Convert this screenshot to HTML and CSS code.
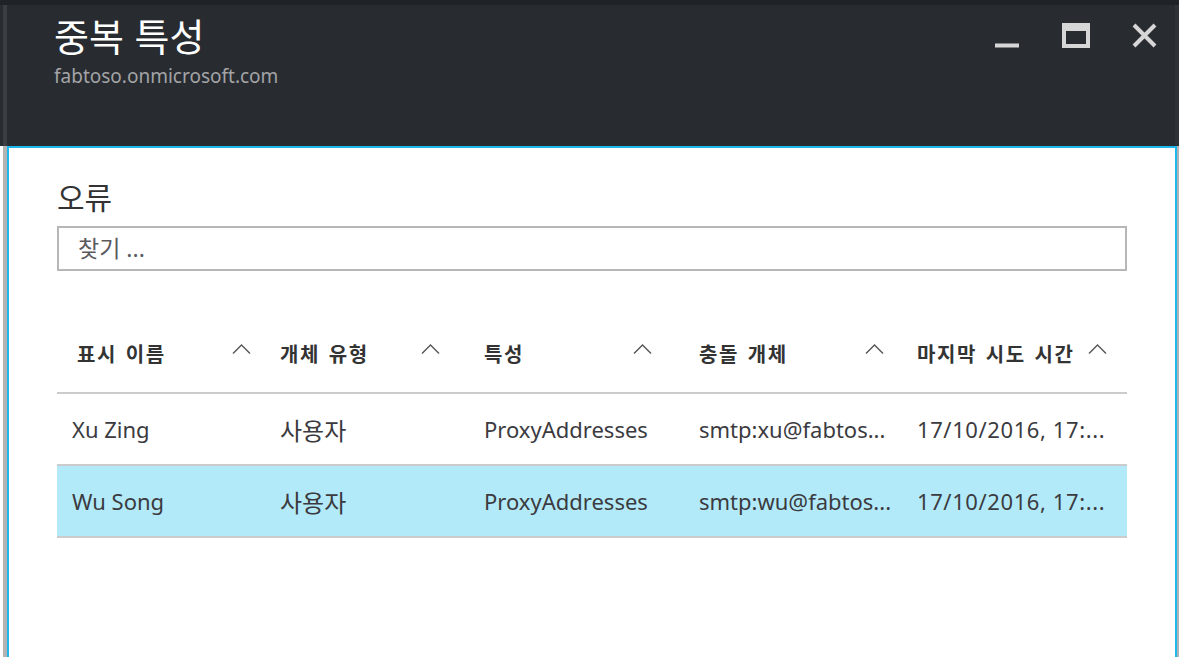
FILE: index.html
```html
<!DOCTYPE html>
<html lang="ko">
<head>
<meta charset="utf-8">
<title>중복 특성</title>
<link rel="stylesheet" href="styles.css">
</head>
<body>
<div class="topstrip"></div>
<header class="head">
  <div class="head-inner">
    <div class="titles">
      <h1 class="title">중복 특성</h1>
      <div class="sub">fabtoso.onmicrosoft.com</div>
    </div>
    <div class="controls">
      <svg class="ic ic-min" width="24" height="5" viewBox="0 0 24 5"><rect x="0" y="0.5" width="24" height="4" fill="#d6d6d6"/></svg>
      <svg class="ic ic-max" width="28" height="25" viewBox="0 0 28 25"><path d="M0 0H28V25H0Z M4 8V21H24V8Z" fill="#d6d6d6" fill-rule="evenodd"/></svg>
      <svg class="ic ic-close" width="25" height="25" viewBox="0 0 25 25"><path d="M2 2L23 23M23 2L2 23" stroke="#d6d6d6" stroke-width="4" fill="none"/></svg>
    </div>
  </div>
</header>
<main class="body">
  <div class="blade">
    <div class="panel">
      <h2 class="label">오류</h2>
      <div class="search">찾기 ...</div>
      <div class="table">
        <div class="row hrow">
          <div class="hcell h1"><span>표시 이름</span><svg class="caret" width="19" height="10" viewBox="0 0 19 10"><path d="M1 9.5L9.5 1L18 9.5" stroke="#555" stroke-width="1.4" fill="none"/></svg></div>
          <div class="hcell h2"><span>개체 유형</span><svg class="caret" width="19" height="10" viewBox="0 0 19 10"><path d="M1 9.5L9.5 1L18 9.5" stroke="#555" stroke-width="1.4" fill="none"/></svg></div>
          <div class="hcell h3"><span>특성</span><svg class="caret" width="19" height="10" viewBox="0 0 19 10"><path d="M1 9.5L9.5 1L18 9.5" stroke="#555" stroke-width="1.4" fill="none"/></svg></div>
          <div class="hcell h4"><span>충돌 개체</span><svg class="caret" width="19" height="10" viewBox="0 0 19 10"><path d="M1 9.5L9.5 1L18 9.5" stroke="#555" stroke-width="1.4" fill="none"/></svg></div>
          <div class="hcell h5"><span>마지막 시도 시간</span><svg class="caret" width="19" height="10" viewBox="0 0 19 10"><path d="M1 9.5L9.5 1L18 9.5" stroke="#555" stroke-width="1.4" fill="none"/></svg></div>
        </div>
        <div class="row drow">
          <div class="cell">Xu Zing</div>
          <div class="cell ko">사용자</div>
          <div class="cell">ProxyAddresses</div>
          <div class="cell">smtp:xu@fabtos...</div>
          <div class="cell date">17/10/2016, 17:...</div>
        </div>
        <div class="row drow selected">
          <div class="cell">Wu Song</div>
          <div class="cell ko">사용자</div>
          <div class="cell">ProxyAddresses</div>
          <div class="cell">smtp:wu@fabtos...</div>
          <div class="cell date">17/10/2016, 17:...</div>
        </div>
      </div>
    </div>
  </div>
</main>
</body>
</html>
```
FILE: styles.css
```css
* { box-sizing: border-box; }
html, body { margin: 0; padding: 0; }
body {
  width: 1179px;
  height: 657px;
  overflow: hidden;
  background: #fff;
  font-family: "Noto Sans", "Noto Sans CJK KR", sans-serif;
  color: #3b3b3f;
}
.topstrip { height: 5px; background: #1f2226; }
.head {
  height: 141px;
  background: #282c31;
  padding-left: 3px;
}
.head-inner {
  height: 100%;
  border-left: 4px solid #3a3e43;
  border-right: 4px solid #2f3338;
  display: flex;
  justify-content: space-between;
  align-items: flex-start;
}
.titles { padding-left: 47px; padding-top: 9px; }
.title {
  margin: 0;
  font-family: "Liberation Sans", "Noto Sans CJK KR", sans-serif;
  font-weight: 400;
  font-size: 38px;
  line-height: 48px;
  color: #fff;
}
.sub {
  font-size: 19px;
  line-height: 22px;
  color: #a3a4a6;
  margin-top: 3px;
}
.controls {
  display: flex;
  align-items: flex-start;
  padding-top: 18px;
  padding-right: 18px;
}
.ic { display: block; }
.ic-min { margin-top: 20px; margin-right: 43px; }
.ic-max { margin-right: 42px; }
.body {
  height: 511px;
  padding-left: 3px;
}
.blade {
  height: 100%;
  border-left: 4px solid #b3b3b3;
  border-right: 2px solid #b3b3b3;
}
.panel {
  height: 100%;
  border: 2px solid #1db9ec;
  border-bottom: none;
  padding: 29px 48px 0 48px;
}
.label {
  margin: 0;
  font-family: "Noto Sans CJK KR", sans-serif;
  font-weight: 400;
  font-size: 30px;
  line-height: 38px;
  color: #333;
}
.search {
  margin-top: 11px;
  height: 45px;
  border: 2px solid #b7b7b7;
  padding-left: 19px;
  font-size: 23px;
  line-height: 40px;
  color: #5a5a5e;
}
.table { margin-top: 49px; }
.row {
  display: grid;
  grid-template-columns: 208px 204px 215px 218px 225px;
  border-bottom: 2px solid #cccccc;
}
.hrow { height: 74px; }
.hcell {
  display: flex;
  align-items: center;
  justify-content: space-between;
  padding-left: 15px;
  padding-bottom: 5px;
  font-weight: 700;
  font-size: 20px;
  letter-spacing: 1.6px;
  word-spacing: 2px;
  color: #333;
  white-space: nowrap;
}
.hcell .caret { margin-bottom: 10px; flex: none; }
.h1 { padding-left: 20px; padding-right: 14px; }
.h2 { padding-right: 29px; }
.h3 { padding-right: 32px; }
.h4 { padding-right: 18px; }
.h5 { padding-right: 20px; }
.drow { height: 72px; }
.selected { background: #b3eaf9; }
.cell {
  display: flex;
  align-items: center;
  padding-left: 15px;
  font-size: 22px;
  white-space: nowrap;
  overflow: hidden;
}
.cell.ko { font-size: 24px; }
.cell.date { letter-spacing: 0.6px; }
```
